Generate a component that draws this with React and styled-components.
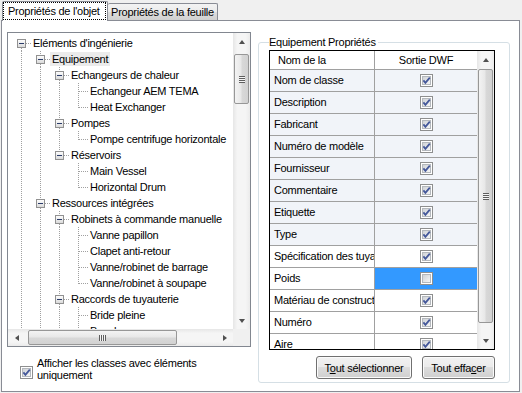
import React from 'react'
import styled, { createGlobalStyle } from 'styled-components'

const GlobalStyle = createGlobalStyle`
  html, body {
    margin: 0;
    padding: 0;
    background: #f0f0f0;
  }
  body {
    font-family: "Liberation Sans", Arial, sans-serif;
    font-size: 11px;
    letter-spacing: -0.25px;
    color: #000;
  }
`

const Window = styled.div`
  width: 522px;
  height: 393px;
  overflow: hidden;
  background: #f0f0f0;
`

const TabStrip = styled.div`
  display: flex;
  align-items: flex-end;
  height: 20px;
  padding-left: 2px;
`

const Tab = styled.div`
  position: relative;
  z-index: ${p => (p.$active ? 2 : 1)};
  box-sizing: border-box;
  width: ${p => p.$w}px;
  height: ${p => (p.$active ? '20px' : '17px')};
  margin-bottom: ${p => (p.$active ? '-1px' : '0')};
  padding: ${p => (p.$active ? '0 1px 1px 0' : '0')};
  border: 1px solid #898c95;
  border-bottom: none;
  border-left: ${p => (p.$active ? '1px solid #898c95' : 'none')};
  border-radius: 2px 2px 0 0;
  background: ${p => (p.$active ? '#fff' : 'linear-gradient(#f3f3f3, #ebebeb 50%, #dddddd 51%, #d0d0d0)')};
  display: flex;
  align-items: center;
  justify-content: center;
  white-space: nowrap;
`

const FocusLabel = styled.span`
  flex: 1;
  align-self: stretch;
  padding-left: 4px;
  line-height: 17px;
  border: 1px dotted #000;
`

const Panel = styled.div`
  box-sizing: border-box;
  margin-left: 1px;
  width: 519px;
  height: 372px;
  background: #fff;
  border: 1px solid #898c95;
  display: flex;
  align-items: flex-start;
  gap: 7px;
  padding: 11px 0 0 5px;
`

const LeftColumn = styled.div`
  display: flex;
  flex-direction: column;
  width: 244px;
`

const TreeBox = styled.div`
  box-sizing: border-box;
  height: 315px;
  border: 1px solid #828790;
  display: grid;
  grid-template-columns: 1fr 17px;
  grid-template-rows: 1fr 17px;
  overflow: hidden;
`

const TreeView = styled.div`
  overflow: hidden;
  padding: 2px 0 0 4px;
`

const TreeRow = styled.div`
  display: flex;
  height: 16px;
`

const NodeLabel = styled.span`
  margin-top: 1px;
  height: 14px;
  padding: 0 2px;
  line-height: 14px;
  white-space: nowrap;
  background: ${p => (p.$selected ? '#ebebeb' : 'transparent')};
`

const ScrollV = styled.div`
  display: flex;
  flex-direction: column;
  background: linear-gradient(to right, #e6e6e6, #f5f5f5 25%, #f5f5f5 75%, #ebebeb);
`

const ScrollH = styled.div`
  display: flex;
  background: linear-gradient(#e6e6e6, #f5f5f5 25%, #f5f5f5 75%, #ebebeb);
`

const Corner = styled.div`
  background: #f0f0f0;
`

const ArrowButton = styled.div`
  flex: none;
  width: 17px;
  height: 17px;
  display: flex;
  align-items: center;
  justify-content: center;
`

const Arrow = styled.span`
  width: 0;
  height: 0;
  border-style: solid;
  border-color: transparent;
  ${p => p.$dir === 'up' && 'border-width: 0 3.5px 4px; border-bottom-color: #505050;'}
  ${p => p.$dir === 'down' && 'border-width: 4px 3.5px 0; border-top-color: #505050;'}
  ${p => p.$dir === 'left' && 'border-width: 3.5px 4px 3.5px 0; border-right-color: #505050;'}
  ${p => p.$dir === 'right' && 'border-width: 3.5px 0 3.5px 4px; border-left-color: #505050;'}
`

const Track = styled.div`
  flex: 1;
`

const Thumb = styled.div`
  flex: none;
  box-sizing: border-box;
  border: 1px solid #979797;
  border-radius: 2px;
  display: flex;
  align-items: center;
  justify-content: center;
  ${p =>
    p.$horizontal
      ? `width: ${p.$size}px; margin: 1px 0 1px ${p.$offset}px;
         background: linear-gradient(#f3f3f3, #e8e8e8 45%, #d8d8d8 55%, #d2d2d2);`
      : `height: ${p.$size}px; margin: ${p.$offset}px 1px 0;
         background: linear-gradient(to right, #f3f3f3, #e8e8e8 45%, #d8d8d8 55%, #d2d2d2);`}
`

const Grip = styled.span`
  ${p =>
    p.$horizontal
      ? 'width: 7px; height: 6px; background: repeating-linear-gradient(to right, #5e5e5e 0 1px, #f4f4f4 1px 2px);'
      : 'width: 6px; height: 7px; background: repeating-linear-gradient(#5e5e5e 0 1px, #f4f4f4 1px 2px);'}
`

const OptionRow = styled.label`
  display: flex;
  align-items: flex-start;
  gap: 4px;
  margin: 10px 0 0 13px;
  line-height: 12px;
`

const BoxWrap = styled.span`
  display: flex;
  margin-top: 9px;
`

const GroupBox = styled.fieldset`
  box-sizing: border-box;
  width: 252px;
  min-width: 0;
  margin: 4px 0 0;
  padding: 1px 14px 3px 10px;
  border: 1px solid #d5dfe5;
  border-radius: 3px;
`

const Legend = styled.legend`
  padding: 0 2px 0 0;
  line-height: 13px;
`

const GridFrame = styled.div`
  box-sizing: border-box;
  display: flex;
  height: 300px;
  border: 1px solid #000;
  background: #fff;
`

const GridBody = styled.div`
  flex: 1;
  display: flex;
  flex-direction: column;
  overflow: hidden;
`

const HeaderRow = styled.div`
  flex: none;
  box-sizing: border-box;
  display: flex;
  height: 19px;
  border-bottom: 1px solid #a0a0a0;
`

const HeaderCell = styled.div`
  box-sizing: border-box;
  line-height: 18px;
  white-space: nowrap;
  overflow: hidden;
  ${p =>
    p.$first
      ? 'width: 105px; padding-left: 8px; border-right: 1px solid #a0a0a0;'
      : 'flex: 1; text-align: center;'}
`

const Row = styled.div`
  flex: none;
  box-sizing: border-box;
  display: flex;
  height: 22px;
  border-bottom: 1px solid #a0a0a0;
  background: ${p => (p.$tint ? '#f1f4f9' : '#fff')};
`

const NameCell = styled.div`
  box-sizing: border-box;
  width: 105px;
  padding-left: 4px;
  line-height: 21px;
  white-space: nowrap;
  overflow: hidden;
  border-right: 1px solid #a0a0a0;
`

const CheckCell = styled.div`
  flex: 1;
  display: flex;
  align-items: center;
  justify-content: center;
  background: ${p => (p.$selected ? '#3399ff' : 'transparent')};
`

const ButtonRow = styled.div`
  display: flex;
  justify-content: flex-end;
  gap: 10px;
  margin-top: 6px;
`

const Button = styled.button`
  box-sizing: border-box;
  width: ${p => p.$w}px;
  height: 23px;
  padding: 0;
  font: inherit;
  letter-spacing: inherit;
  color: #000;
  border: 1px solid #707070;
  border-radius: 3px;
  background: linear-gradient(#f2f2f2, #ebebeb 49%, #dddddd 50%, #cfcfcf);
  box-shadow: inset 0 0 0 1px #fbfbfb;
`

const Dotted = props => (
  <line stroke="#a0a0a0" strokeDasharray="1 1" shapeRendering="crispEdges" {...props} />
)

const Guide = ({ on }) => (
  <svg width="19" height="16" style={{ flex: 'none' }}>
    {on && <Dotted x1="9.5" y1="0" x2="9.5" y2="16" />}
  </svg>
)

const Connector = ({ up, down, box }) => (
  <svg width="19" height="16" style={{ flex: 'none' }}>
    <defs>
      <linearGradient id="expander" x1="0" y1="0" x2="0" y2="1">
        <stop offset="0" stopColor="#ffffff" />
        <stop offset="1" stopColor="#d8d8d8" />
      </linearGradient>
    </defs>
    {up && <Dotted x1="9.5" y1="0" x2="9.5" y2={box ? 4 : 9} />}
    {down && <Dotted x1="9.5" y1={box ? 13 : 8} x2="9.5" y2="16" />}
    <Dotted x1={box ? 14 : 10} y1="8.5" x2="19" y2="8.5" />
    {box && (
      <>
        <rect x="5.5" y="4.5" width="8" height="8" fill="url(#expander)" stroke="#919191" shapeRendering="crispEdges" />
        <line x1="7" y1="8.5" x2="12" y2="8.5" stroke="#2b3c6a" shapeRendering="crispEdges" />
      </>
    )}
  </svg>
)

const CheckBox = ({ checked }) => (
  <svg width="13" height="13" viewBox="0 0 13 13" style={{ flex: 'none' }}>
    <defs>
      <linearGradient id="checkFill" x1="0" y1="0" x2="1" y2="1">
        <stop offset="0" stopColor="#cdd0d4" />
        <stop offset="1" stopColor="#f8f8f8" />
      </linearGradient>
    </defs>
    <rect x="0.5" y="0.5" width="12" height="12" fill="#fff" stroke="#8e8f8f" shapeRendering="crispEdges" />
    <rect x="2.5" y="2.5" width="8" height="8" fill="url(#checkFill)" stroke="#b4b8bd" shapeRendering="crispEdges" />
    {checked && (
      <path d="M3.4 6.4 L5.4 8.8 L9.8 3.6" fill="none" stroke="#44589a" strokeWidth="1.8" />
    )}
  </svg>
)

const VerticalScroll = ({ offset, size }) => (
  <ScrollV>
    <ArrowButton><Arrow $dir="up" /></ArrowButton>
    <Thumb $offset={offset} $size={size}><Grip /></Thumb>
    <Track />
    <ArrowButton><Arrow $dir="down" /></ArrowButton>
  </ScrollV>
)

const HorizontalScroll = ({ offset, size }) => (
  <ScrollH>
    <ArrowButton><Arrow $dir="left" /></ArrowButton>
    <Thumb $horizontal $offset={offset} $size={size}><Grip $horizontal /></Thumb>
    <Track />
    <ArrowButton><Arrow $dir="right" /></ArrowButton>
  </ScrollH>
)

// flattened tree: guides = continuing lines of the ancestors
const treeRows = [
  { label: "Eléments d'ingénierie", guides: [], box: true, up: false, down: true },
  { label: 'Equipement', guides: [1], box: true, up: true, down: true, selected: true },
  { label: 'Echangeurs de chaleur', guides: [1, 1], box: true, up: true, down: true },
  { label: 'Echangeur AEM TEMA', guides: [1, 1, 1], up: true, down: true },
  { label: 'Heat Exchanger', guides: [1, 1, 1], up: true, down: false },
  { label: 'Pompes', guides: [1, 1], box: true, up: true, down: true },
  { label: 'Pompe centrifuge horizontale', guides: [1, 1, 1], up: true, down: false },
  { label: 'Réservoirs', guides: [1, 1], box: true, up: true, down: false },
  { label: 'Main Vessel', guides: [1, 1, 0], up: true, down: true },
  { label: 'Horizontal Drum', guides: [1, 1, 0], up: true, down: false },
  { label: 'Ressources intégrées', guides: [1], box: true, up: true, down: true },
  { label: 'Robinets à commande manuelle', guides: [1, 1], box: true, up: true, down: true },
  { label: 'Vanne papillon', guides: [1, 1, 1], up: true, down: true },
  { label: 'Clapet anti-retour', guides: [1, 1, 1], up: true, down: true },
  { label: 'Vanne/robinet de barrage', guides: [1, 1, 1], up: true, down: true },
  { label: 'Vanne/robinet à soupape', guides: [1, 1, 1], up: true, down: false },
  { label: 'Raccords de tuyauterie', guides: [1, 1], box: true, up: true, down: true },
  { label: 'Bride pleine', guides: [1, 1, 1], up: true, down: true },
  { label: 'Bouchon', guides: [1, 1, 1], up: true, down: true },
]

const properties = [
  { name: 'Nom de classe', checked: true },
  { name: 'Description', checked: true },
  { name: 'Fabricant', checked: true },
  { name: 'Numéro de modèle', checked: true },
  { name: 'Fournisseur', checked: true },
  { name: 'Commentaire', checked: true },
  { name: 'Etiquette', checked: true },
  { name: 'Type', checked: true },
  { name: 'Spécification des tuyauteries', checked: true },
  { name: 'Poids', checked: false, selected: true },
  { name: 'Matériau de construction', checked: true },
  { name: 'Numéro', checked: true },
  { name: 'Aire', checked: true },
]

const App = () => {
  return (
    <Window>
      <GlobalStyle />
      <TabStrip>
        <Tab $active $w={106}>
          <FocusLabel>Propriétés de l'objet</FocusLabel>
        </Tab>
        <Tab $w={110}>Propriétés de la feuille</Tab>
      </TabStrip>
      <Panel>
        <LeftColumn>
          <TreeBox>
            <TreeView>
              {treeRows.map((row, i) => (
                <TreeRow key={i}>
                  {row.guides.map((g, j) => (
                    <Guide key={j} on={!!g} />
                  ))}
                  <Connector up={row.up} down={row.down} box={row.box} />
                  <NodeLabel $selected={row.selected}>{row.label}</NodeLabel>
                </TreeRow>
              ))}
            </TreeView>
            <VerticalScroll offset={4} size={50} />
            <HorizontalScroll offset={3} size={149} />
            <Corner />
          </TreeBox>
          <OptionRow>
            <BoxWrap><CheckBox checked /></BoxWrap>
            <span>
              Afficher les classes avec éléments
              <br />
              uniquement
            </span>
          </OptionRow>
        </LeftColumn>

        <GroupBox>
          <Legend>Equipement Propriétés</Legend>
          <GridFrame>
            <GridBody>
              <HeaderRow>
                <HeaderCell $first>Nom de la</HeaderCell>
                <HeaderCell>Sortie DWF</HeaderCell>
              </HeaderRow>
              {properties.map((p, i) => (
                <Row key={p.name} $tint={i < 8}>
                  <NameCell>{p.name}</NameCell>
                  <CheckCell $selected={p.selected}>
                    <CheckBox checked={p.checked} />
                  </CheckCell>
                </Row>
              ))}
            </GridBody>
            <VerticalScroll offset={1} size={254} />
          </GridFrame>
          <ButtonRow>
            <Button $w={96}>T<u>o</u>ut sélectionner</Button>
            <Button $w={73}>Tout effa<u>c</u>er</Button>
          </ButtonRow>
        </GroupBox>
      </Panel>
    </Window>
  )
}

export default App
